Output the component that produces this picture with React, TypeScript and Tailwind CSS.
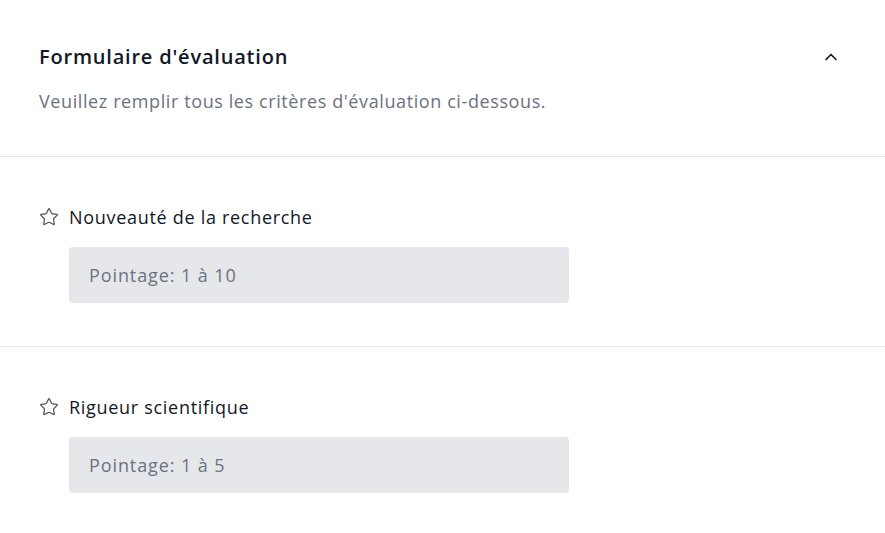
import { ChevronUp, Star } from "lucide-react";

const criteria = [
  { label: "Nouveauté de la recherche", placeholder: "Pointage: 1 à 10" },
  { label: "Rigueur scientifique", placeholder: "Pointage: 1 à 5" },
];

export default function App() {
  return (
    <div className="min-h-screen bg-white font-['Open_Sans',sans-serif] text-[#111827]">
      {/* header */}
      <div className="border-b border-[#e5e7eb] pl-[39px] pr-[44px] pt-[43px] pb-[41px]">
        <div className="flex items-center justify-between">
          <h2 className="text-[20px] leading-[28px] font-semibold tracking-[0.8px]">Formulaire d'évaluation</h2>
          <ChevronUp className="h-5 w-5 text-[#111827]" strokeWidth={2} />
        </div>
        <p className="mt-[17px] text-[18px] leading-[27px] tracking-[0.6px] text-[#6b7280]">
          Veuillez remplir tous les critères d'évaluation ci-dessous.
        </p>
      </div>

      {criteria.map((item, index) => (
        <div key={index} className="border-b border-[#e5e7eb] pl-[39px] pt-[46px] pb-[43px]">
          <div className="flex h-[28px] items-center gap-[10px]">
            <Star className="h-5 w-5 text-[#4b5563]" strokeWidth={1.5} />
            <span className="text-[18px] tracking-[0.7px]">{item.label}</span>
          </div>
          <div className="ml-[30px] mt-4">
            <input
              placeholder={item.placeholder}
              className="h-14 w-[500px] rounded bg-[#e5e7eb] px-5 text-[18px] tracking-[0.9px] text-[#111827] outline-none placeholder:text-[#6b7280]"
            />
          </div>
        </div>
      ))}
    </div>
  );
}
